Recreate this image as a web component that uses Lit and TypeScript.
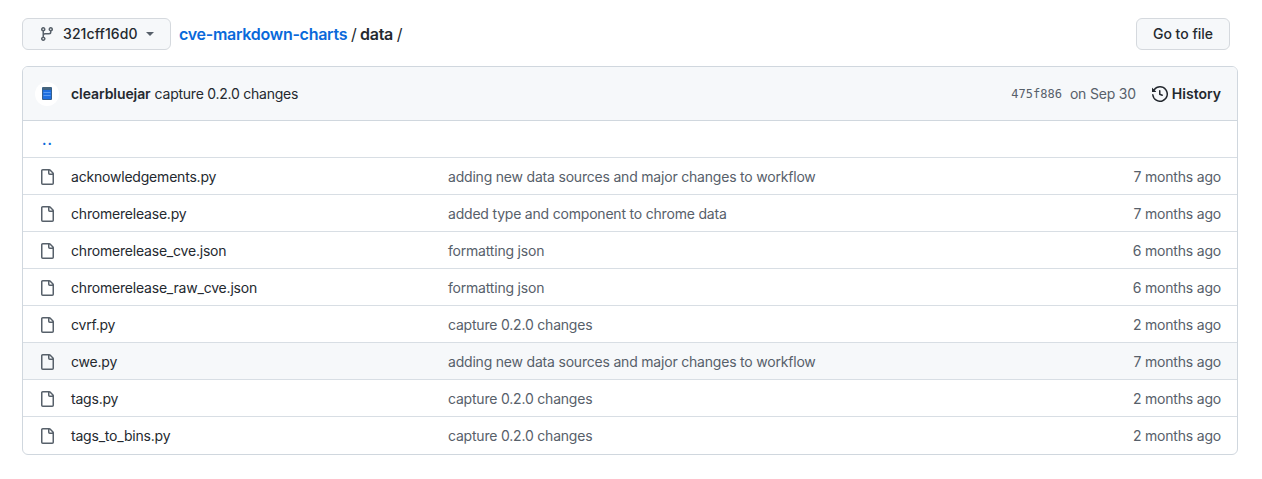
import { LitElement, html, css, svg } from "lit";
import { customElement } from "lit/decorators.js";

const BRANCH = "M9.5 3.25a2.25 2.25 0 1 1 3 2.122V6A2.5 2.5 0 0 1 10 8.5H6a1 1 0 0 0-1 1v1.128a2.251 2.251 0 1 1-1.5 0V5.372a2.25 2.25 0 1 1 1.5 0v1.836A2.493 2.493 0 0 1 6 7h4a1 1 0 0 0 1-1v-.628A2.25 2.25 0 0 1 9.5 3.25Zm-6 0a.75.75 0 1 0 1.5 0 .75.75 0 0 0-1.5 0Zm8.25-.75a.75.75 0 1 0 0 1.5.75.75 0 0 0 0-1.5ZM4.25 12a.75.75 0 1 0 0 1.5.75.75 0 0 0 0-1.5Z";
const FILE = "M2 1.75C2 .784 2.784 0 3.75 0h6.586c.464 0 .909.184 1.237.513l2.914 2.914c.329.328.513.773.513 1.237v9.586A1.75 1.75 0 0 1 13.25 16h-9.5A1.75 1.75 0 0 1 2 14.25Zm1.75-.25a.25.25 0 0 0-.25.25v12.5c0 .138.112.25.25.25h9.5a.25.25 0 0 0 .25-.25V6h-2.75A1.75 1.75 0 0 1 9 4.25V1.5Zm6.75.062V4.25c0 .138.112.25.25.25h2.688l-.011-.013-2.914-2.914-.013-.011Z";
const HISTORY = "m.427 1.927 1.215 1.215a8.002 8.002 0 1 1-1.6 5.685.75.75 0 1 1 1.493-.154 6.5 6.5 0 1 0 1.18-4.458l1.358 1.358A.25.25 0 0 1 3.896 6H.25A.25.25 0 0 1 0 5.75V2.104a.25.25 0 0 1 .427-.177ZM7.75 4a.75.75 0 0 1 .75.75v2.992l2.028.812a.75.75 0 0 1-.557 1.392l-2.5-1A.751.751 0 0 1 7 8.25v-3.5A.75.75 0 0 1 7.75 4Z";

const icon = (d: string) => html`<svg class="icon" viewBox="0 0 16 16" width="16" height="16" aria-hidden="true">${svg`<path fill="currentColor" d=${d}></path>`}</svg>`;

const FILES = [
  ["acknowledgements.py", "adding new data sources and major changes to workflow", "7 months ago"],
  ["chromerelease.py", "added type and component to chrome data", "7 months ago"],
  ["chromerelease_cve.json", "formatting json", "6 months ago"],
  ["chromerelease_raw_cve.json", "formatting json", "6 months ago"],
  ["cvrf.py", "capture 0.2.0 changes", "2 months ago"],
  ["cwe.py", "adding new data sources and major changes to workflow", "7 months ago"],
  ["tags.py", "capture 0.2.0 changes", "2 months ago"],
  ["tags_to_bins.py", "capture 0.2.0 changes", "2 months ago"],
];

@customElement("app-root")
export class AppRoot extends LitElement {
  static styles = css`
    :host {
      display: block;
      box-sizing: border-box;
      height: 479px;
      padding: 18px 24px 0 22px;
      background: #fff;
      font-family: Inter, "Liberation Sans", sans-serif;
      font-size: 14px;
      line-height: 20px;
      color: #24292f;
    }
    .icon { display: block; flex: none; }
    .top { display: flex; align-items: center; height: 32px; padding-right: 8px; margin-bottom: 16px; }
    .btn {
      box-sizing: border-box;
      height: 32px;
      display: flex;
      align-items: center;
      border: 1px solid #d5d9de;
      border-radius: 6px;
      background: #f6f8fa;
      font-weight: 500;
      color: #24292f;
    }
    .branch { width: 149px; padding-left: 16px; margin-right: 8px; letter-spacing: 0.1px; }
    .branch .icon { color: #57606a; margin-right: 8px; }
    .caret {
      width: 0; height: 0; margin-left: 8px;
      border-left: 4px solid transparent;
      border-right: 4px solid transparent;
      border-top: 4px solid #57606a;
    }
    .crumbs { flex: 1; font-size: 16px; font-weight: 400; white-space: pre; letter-spacing: -0.27px; word-spacing: -0.6px; }
    .crumbs a { color: #0969da; font-weight: 600; text-decoration: none; }
    .crumbs b { font-weight: 600; }
    .goto { width: 94px; justify-content: center; }
    .box { border: 1px solid #d0d7de; border-radius: 6px; overflow: hidden; }
    .head {
      display: flex;
      align-items: center;
      height: 53px;
      padding: 0 16px 0 12px;
      background: #f6f8fa;
      border-bottom: 1px solid #d0d7de;
    }
    .avatar {
      width: 24px; height: 24px; border-radius: 50%;
      background: #fff;
      margin-right: 12px;
      display: flex; align-items: center; justify-content: center;
    }
    .avatar svg { display: block; }
    .author { font-weight: 600; margin-right: 4px; letter-spacing: -0.08px; }
    .msg { flex: 1; color: #24292f; letter-spacing: -0.24px; }
    .sha { font-family: "DejaVu Sans Mono", "Liberation Mono", monospace; font-size: 12px; color: #57606a; margin-right: 8px; }
    .date { color: #57606a; margin-right: 16px; letter-spacing: -0.2px; }
    .history { display: flex; align-items: center; gap: 4px; font-weight: 600; }
    .row {
      box-sizing: border-box;
      display: flex;
      align-items: center;
      height: 37px;
      padding: 1px 16px 0;
      border-bottom: 1px solid #d8dee4;
      letter-spacing: -0.2px;
    }
    .row:last-child { border-bottom: 0; padding-top: 0; }
    .row.hover { background: #f6f8fa; }
    .row .icon { color: #57606a; margin-right: 16px; }
    .name { width: 377px; flex: none; }
    .cm { flex: 1; color: #57606a; }
    .age { color: #57606a; }
    .up { color: #0969da; font-weight: 600; padding-left: 3px; letter-spacing: 1px; }
  `;

  render() {
    return html`
      <div class="top">
        <div class="btn branch">${icon(BRANCH)}<span>321cff16d0</span><span class="caret"></span></div>
        <div class="crumbs"><a>cve-markdown-charts</a> / <b>data</b> /</div>
        <div class="btn goto">Go to file</div>
      </div>
      <div class="box">
        <div class="head">
          <div class="avatar">
            <svg width="10" height="13" viewBox="0 0 10 13">
              <rect x="0" y="0" width="10" height="13" rx="1" fill="#35608f"></rect>
              <rect x="1" y="0" width="8" height="2.5" fill="#47657c"></rect>
              <rect x="1" y="3" width="8" height="9" fill="#1f6fe0"></rect>
              <rect x="1.5" y="5" width="7" height="1" fill="#5b9bf0"></rect>
              <rect x="1.5" y="8" width="7" height="1" fill="#5b9bf0"></rect>
            </svg>
          </div>
          <span class="author">clearbluejar</span>
          <span class="msg">capture 0.2.0 changes</span>
          <span class="sha">475f886</span>
          <span class="date">on Sep 30</span>
          <span class="history">${icon(HISTORY)}History</span>
        </div>
        <div class="row"><span class="up">..</span></div>
        ${FILES.map(([n, m, a]) => html`
          <div class="row ${n === "cwe.py" ? "hover" : ""}">
            ${icon(FILE)}
            <span class="name">${n}</span>
            <span class="cm">${m}</span>
            <span class="age">${a}</span>
          </div>`)}
      </div>
    `;
  }
}
